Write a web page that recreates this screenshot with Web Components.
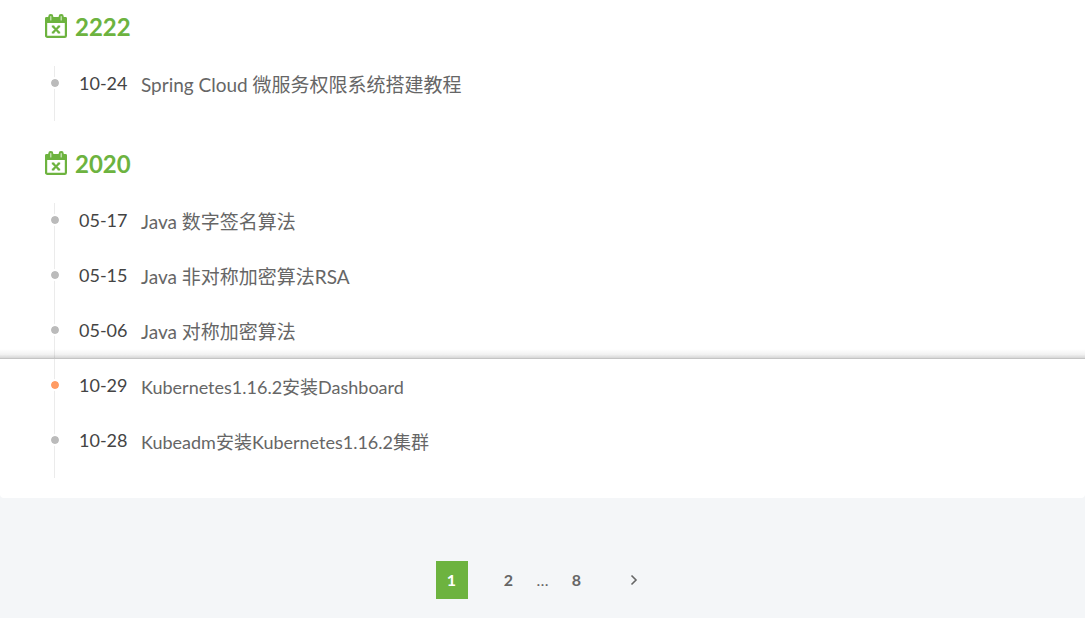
<!DOCTYPE html>
<html lang="zh-CN">
<head>
<meta charset="utf-8">
<title>Archives</title>
<style>
  body { margin: 0; background: #f4f6f8; color: #666; font-family: Lato, "Noto Sans CJK SC", sans-serif; }
</style>
</head>
<body>
<archive-card>
  <archive-year year="2222">
    <archive-entry date="10-24">Spring Cloud 微服务权限系统搭建教程</archive-entry>
  </archive-year>
  <archive-year year="2020">
    <archive-entry date="05-17">Java 数字签名算法</archive-entry>
    <archive-entry date="05-15">Java 非对称加密算法RSA</archive-entry>
    <archive-entry date="05-06" divided>Java 对称加密算法</archive-entry>
    <archive-entry date="10-29" active compact>Kubernetes1.16.2安装Dashboard</archive-entry>
    <archive-entry date="10-28" compact>Kubeadm安装Kubernetes1.16.2集群</archive-entry>
  </archive-year>
</archive-card>
<archive-pager></archive-pager>

<template id="card">
  <style>
    :host { display: block; background: #fff; border-radius: 0 0 4px 4px; padding-bottom: 20px; }
  </style>
  <main><slot></slot></main>
</template>

<template id="year">
  <style>
    :host { display: block; }
    :host(:not(:first-child)) { padding-top: 16px; }
    h2 { display: flex; align-items: center; gap: 7px; height: 38px; margin: 0; padding: 8px 44px 20px;
         color: #6db33f; font-size: 24px; line-height: 38px; font-weight: 700; }
    svg { width: 24px; height: 26px; }
  </style>
  <section>
    <h2>
      <svg viewBox="0 0 24 26" aria-hidden="true">
        <rect x="2.100" y="4.100" width="19.800" height="18.800" rx="1.200" fill="none" stroke="currentColor" stroke-width="2.200"/>
        <rect x="1" y="3" width="22" height="6" rx="1.500" fill="currentColor"/>
        <rect x="4.300" y="0" width="5" height="7.500" rx="2.400" fill="currentColor"/>
        <rect x="14.700" y="0" width="5" height="7.500" rx="2.400" fill="currentColor"/>
        <path d="M6.800 2.500V6M17.200 2.500V6" stroke="#d3e8c5" stroke-width="1.200" stroke-linecap="round"/>
        <path d="M9 12.500L15 18.500M15 12.500L9 18.500" stroke="currentColor" stroke-width="2.200"/>
        <path d="M7.800 12.400H10.300M13.700 12.400H16.200M7.800 18.600H10.300M13.700 18.600H16.200" stroke="currentColor" stroke-width="1.600"/>
      </svg>
      <span></span>
    </h2>
    <div role="list"><slot></slot></div>
  </section>
</template>

<template id="entry">
  <style>
    :host { display: block; position: relative; }
    .row { display: grid; grid-template-columns: 24px 48px 1fr; align-items: start; height: 55px; padding: 0 43px; }
    .rail { height: 100%; display: grid; justify-content: center; align-items: start;
            background: linear-gradient(#ebebeb, #ebebeb) 11px 0 / 1px 100% no-repeat; }
    .rail i { width: 8px; height: 8px; margin-top: 11px; border: 2px solid #fff; border-radius: 50%; background: #bbb; background-clip: padding-box; }
    :host([active]) .rail i { background-color: #ff9b63; }
    time { padding-left: 12px; color: #444; font-size: 18px; line-height: 34px; white-space: nowrap; }
    a { padding-left: 26px; color: #666; font-size: 19px; line-height: 38px; text-decoration: none; }
    :host([compact]) a { font-size: 18px; }
    .divider { display: none; }
    :host([divided]) .divider { display: block; position: absolute; left: 0; right: 0; bottom: 9px; height: 9px;
            background: linear-gradient(rgba(0,0,0,0), rgba(0,0,0,.05) 60%, rgba(0,0,0,.16)); border-bottom: 1px solid #c4c4c4; }
  </style>
  <article class="row"><span class="rail"><i></i></span><time></time><a href="#"><slot></slot></a></article>
  <div class="divider"></div>
</template>

<template id="pager">
  <style>
    :host { display: block; padding: 63px 0 19px; }
    nav { display: flex; justify-content: center; gap: 2px; }
    button, span { width: 32px; height: 38px; padding: 0; border: 0; background: none; color: #666;
      font: 700 16px/38px Lato, sans-serif; text-align: center; }
    span { font-weight: 400; }
    .current { margin-right: 23px; background: #6db33f; color: #fff; }
    .next { display: grid; place-items: center; margin-left: 23px; }
    svg { width: 8px; height: 12px; }
  </style>
  <nav aria-label="Pagination">
    <button class="current" aria-current="page">1</button>
    <button>2</button><span>…</span><button>8</button>
    <button class="next" aria-label="Next"><svg viewBox="0 0 8 12"><path d="M1.500 1.500L6 6L1.500 10.500" fill="none" stroke="#666" stroke-width="1.600"/></svg></button>
  </nav>
</template>

<script>
  class TemplateElement extends HTMLElement {
    constructor() {
      super();
      this.attachShadow({ mode: "open" })
        .append(document.getElementById(this.constructor.template).content.cloneNode(true));
    }
  }
  class ArchiveCard extends TemplateElement { static template = "card"; }
  class ArchiveYear extends TemplateElement {
    static template = "year";
    connectedCallback() { this.shadowRoot.querySelector("h2 span").textContent = this.getAttribute("year"); }
  }
  class ArchiveEntry extends TemplateElement {
    static template = "entry";
    connectedCallback() {
      this.setAttribute("role", "listitem");
      this.shadowRoot.querySelector("time").textContent = this.getAttribute("date");
    }
  }
  class ArchivePager extends TemplateElement { static template = "pager"; }
  customElements.define("archive-card", ArchiveCard);
  customElements.define("archive-year", ArchiveYear);
  customElements.define("archive-entry", ArchiveEntry);
  customElements.define("archive-pager", ArchivePager);
</script>
</body>
</html>
